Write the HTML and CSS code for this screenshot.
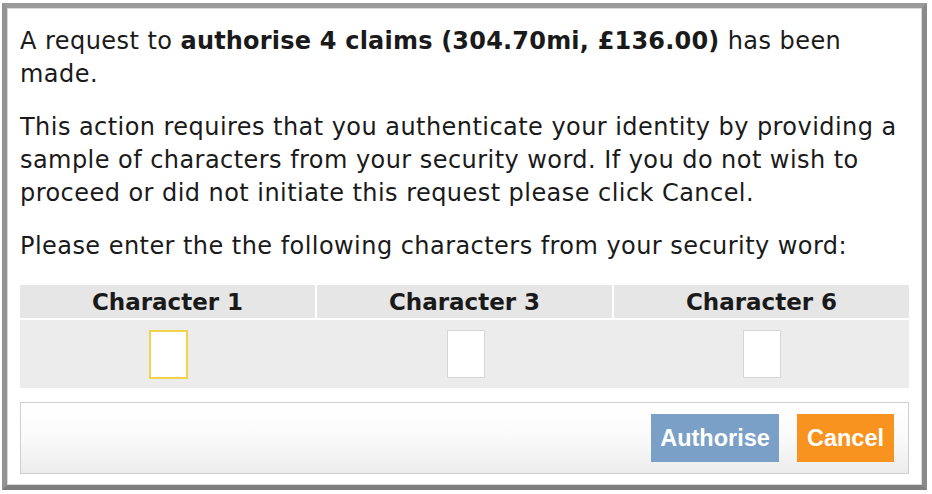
FILE: index.html
```html
<!DOCTYPE html>
<html>
<head>
<meta charset="utf-8">
<link rel="stylesheet" href="styles.css">
</head>
<body>
<div class="frame">
  <div class="dialog">
    <p class="msg">A request to <b>authorise 4 claims (304.70mi, £136.00)</b> has been made.</p>
    <p class="msg">This action requires that you authenticate your identity by providing a sample of characters from your security word. If you do not wish to proceed or did not initiate this request please click Cancel.</p>
    <p class="msg last">Please enter the the following characters from your security word:</p>
    <div class="chars">
      <div class="head">Character 1</div>
      <div class="head">Character 3</div>
      <div class="head">Character 6</div>
      <div class="cell"><span class="box focus"></span></div>
      <div class="cell"><span class="box"></span></div>
      <div class="cell"><span class="box"></span></div>
    </div>
    <div class="bar">
      <button class="btn auth">Authorise</button>
      <button class="btn cancel">Cancel</button>
    </div>
  </div>
</div>
</body>
</html>
```
FILE: styles.css
```css
html, body {
  margin: 0;
  padding: 0;
  background: #ffffff;
}
body {
  width: 932px;
  height: 494px;
  overflow: hidden;
  font-family: "DejaVu Sans", Verdana, sans-serif;
  color: #1a1a1a;
}
.frame {
  margin: 3px 5px 4px 2px;
  height: 477px;
  border: 5px solid #8c8c8c;
  border-color: #9a9a9a #8a8a8a #7e7e7e #939393;
  background: #fff;
}
.dialog {
  height: 100%;
  box-sizing: border-box;
  border: 1px solid #d8d8d8;
  padding: 16px 12px 0 12px;
}
.msg {
  margin: 0 0 20px 0;
  font-size: 24px;
  line-height: 33px;
  letter-spacing: 0.45px;
}
.msg.last {
  margin-bottom: 22px;
}
.msg b {
  font-weight: bold;
  letter-spacing: 0.2px;
}
.chars {
  display: grid;
  grid-template-columns: 1fr 1fr 1fr;
  column-gap: 2px;
  row-gap: 2px;
}
.head {
  background: #e6e6e6;
  text-align: center;
  font-weight: bold;
  font-size: 23px;
  height: 33px;
  line-height: 35px;
}
.cell {
  background: #ececec;
  height: 68px;
  display: flex;
  justify-content: center;
  align-items: center;
}
.chars .cell:nth-child(4) { margin-right: -2px; }
.chars .cell:nth-child(5) { margin-right: -2px; }
.box {
  display: block;
  width: 36px;
  height: 46px;
  background: #fff;
  border: 1px solid #d6d6d6;
}
.box.focus {
  border: 2px solid #f3d24b;
  width: 35px;
  height: 45px;
}
.bar {
  margin-top: 14px;
  height: 72px;
  box-sizing: border-box;
  border: 1px solid #cfcfcf;
  background: linear-gradient(#ffffff 0%, #fafafa 50%, #ececec 100%);
  display: flex;
  justify-content: flex-end;
  align-items: center;
  gap: 18px;
  padding-right: 14px;
}
.btn {
  border: none;
  color: #ffffff;
  font-family: "Liberation Sans", Arial, sans-serif;
  font-weight: bold;
  font-size: 23.5px;
  height: 48px;
  padding: 0 8px;
}
.auth {
  background: #7aa0c8;
  width: 128px;
}
.cancel {
  background: #f7931e;
  width: 97px;
}
```
